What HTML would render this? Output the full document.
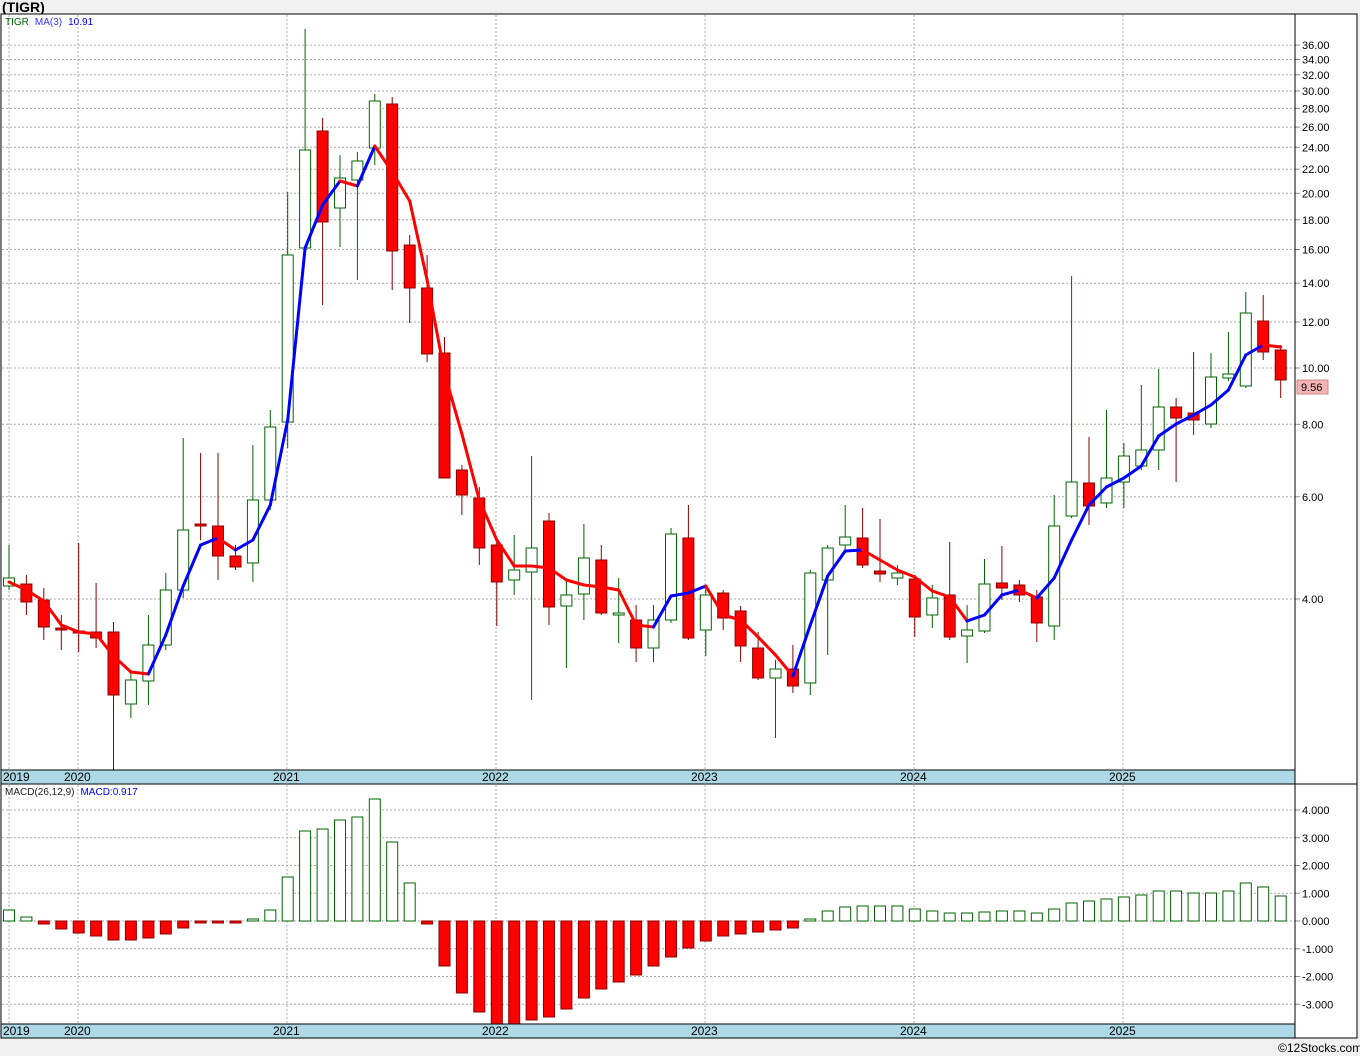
<!DOCTYPE html>
<html><head><meta charset="utf-8"><style>
body{margin:0;background:#f0f0f0;width:1360px;height:1056px;overflow:hidden;font-family:"Liberation Sans",sans-serif}
svg{position:absolute;left:0;top:0}
</style></head><body>
<svg id="s" width="1360" height="1056" xmlns="http://www.w3.org/2000/svg" font-family="Liberation Sans, sans-serif"></svg>
<script>
const S=document.getElementById('s');let h='';
h+='<text x="2" y="12" font-size="14" font-weight="bold">(TIGR)</text>';
h+='<rect x="1" y="14" width="1356" height="1024" fill="#fff" stroke="#000"/>';
h+='<text x="1278" y="1052" font-size="12">©12Stocks.com</text>';
const X=i=>9+17.42*i;
const py=p=>599-252.1*Math.log(p/4);
const years=[[9,'2019'],[78,'2020'],[287,'2021'],[496,'2022'],[705,'2023'],[914,'2024'],[1123,'2025']];
for(const [x] of years){h+=`<line x1="${x}" y1="15" x2="${x}" y2="770" stroke="#aaa" stroke-dasharray="2,2"/><line x1="${x}" y1="785" x2="${x}" y2="1024" stroke="#aaa" stroke-dasharray="2,2"/>`;}
const prices=[36,34,32,30,28,26,24,22,20,18,16,14,12,10,8,6,4];
for(const p of prices){const y=py(p).toFixed(1);h+=`<line x1="2" y1="${y}" x2="1295" y2="${y}" stroke="#aaa" stroke-dasharray="2,2"/><line x1="1295" y1="${y}" x2="1300" y2="${y}" stroke="#888"/><text x="1302" y="${+y+4}" font-size="11">${p.toFixed(2)}</text>`;}
const mv=[4,3,2,1,0,-1,-2,-3];
for(const v of mv){const y=921-27.75*v;h+=`<line x1="2" y1="${y}" x2="1295" y2="${y}" stroke="#aaa" stroke-dasharray="2,2"/><line x1="1295" y1="${y}" x2="1300" y2="${y}" stroke="#888"/><text x="1302" y="${y+4}" font-size="11">${v.toFixed(3)}</text>`;}
const C=[[586,578,545,590,1],[584,602,575,615],[600,627,588,640],[628,630,615,650],[631,633,543,652],[632,638,583,648],[632,695,622,770],[704,680,670,718],[681,645,615,705],[645,590,573,650],[590,530,438,598],[524,526,453,540],[526,556,453,580],[556,567,545,570],[563,500,445,582],[500,427,410,510],[422,255,192,448],[248,150,29,250],[131,222,118,305],[208,178,155,247],[180,161,152,280],[148,101,94,165],[104,251,97,290],[245,288,235,323],[288,354,255,362],[353,478,337,478],[470,495,465,515],[498,548,487,565],[545,582,540,626],[580,570,535,595],[572,548,456,700],[521,607,513,625],[606,595,578,668],[594,558,524,620],[560,613,545,615],[615,613,578,643],[620,648,605,662],[648,620,605,662],[620,534,528,623],[538,638,505,640],[630,595,585,656],[593,618,590,630],[611,646,606,662],[648,678,632,680],[678,669,660,738],[669,686,645,693],[683,573,570,695],[580,548,545,655],[545,537,505,550],[538,565,508,568],[571,574,519,582],[578,573,565,585],[579,617,575,637],[615,598,585,628],[595,637,542,640],[636,630,605,663],[631,584,559,633],[583,588,546,600],[585,595,580,602],[597,623,590,642],[626,526,495,640],[516,482,276,518],[483,506,437,525],[503,478,410,508],[482,456,443,508],[466,450,385,470],[450,407,369,470],[407,418,398,482],[413,420,352,435],[424,377,353,428],[378,374,332,381],[386,313,292,388],[321,352,295,360],[350,380,345,398]];
C.forEach((c,i)=>{const x=X(i);let [o,cl,hi,lo]=c;const up=cl<o;const col=up?'#006400':'#8b0000';
h+=`<line x1="${x.toFixed(1)}" y1="${hi}" x2="${x.toFixed(1)}" y2="${lo}" stroke="${col}"/>`;
const t=Math.min(o,cl),b=Math.max(o,cl);
h+=`<rect x="${(x-5.5).toFixed(1)}" y="${t}" width="11" height="${Math.max(b-t,1)}" fill="${up?'#fff':'#f00'}" stroke="${col}"/>`;});
const M=[582,590,601,625,632,634,656,672,674,635,586,545,538,550,540,505,420,248,205,181,186,146,172,201,280,373,434,500,540,566,566,568,580,585,587,590,625,627,596,593,586,615,620,637,655,676,625,576,551,550,560,570,577,591,597,621,615,595,590,598,578,540,505,487,478,466,436,424,415,405,390,355,345,347];
for(let i=0;i<M.length-1;i++){h+=`<line x1="${X(i).toFixed(1)}" y1="${M[i]}" x2="${X(i+1).toFixed(1)}" y2="${M[i+1]}" stroke="${M[i+1]<M[i]?'#00f':'#f00'}" stroke-width="3" stroke-linecap="round"/>`;}
const D=[910,917,924,929,933,936,940,940,938,934,928,923,923,923,919,910,877,831,829,820,817,799,842,883,924,966,993,1012,1024,1024,1020,1017,1009,998,989,982,975,966,957,948,941,936,934,932,930,928,919,911,907,906,906,906,909,911,913,913,912,911,911,913,909,903,901,899,897,895,891,891,893,893,891,883,887,896];
D.forEach((d,i)=>{const x=X(i)-5.5;if(d<921)h+=`<rect x="${x.toFixed(1)}" y="${d}" width="11" height="${921-d}" fill="#fff" stroke="#006400"/>`;else h+=`<rect x="${x.toFixed(1)}" y="921" width="11" height="${d-921}" fill="#f00" stroke="#8b0000"/>`;});
h+='<rect x="1" y="770" width="1294" height="14" fill="#add8e6" stroke="#000"/><rect x="1" y="1024" width="1294" height="14" fill="#add8e6" stroke="#000"/>';
h+='<line x1="1" y1="784" x2="1357" y2="784" stroke="#000"/><line x1="1295" y1="14" x2="1295" y2="1038" stroke="#000"/>';
for(const [x,t] of years){const lx=x<20?3:x-14;h+=`<line x1="${x}" y1="770" x2="${x}" y2="784" stroke="#aaa" stroke-dasharray="2,2"/><text x="${lx}" y="781" font-size="12">${t}</text><text x="${lx}" y="1035" font-size="12">${t}</text>`;}
h+='<rect x="1297" y="380" width="31" height="14" fill="#f4b4b4" stroke="#c88"/><text x="1301" y="391" font-size="11">9.56</text>';
h+='<text x="5" y="25" font-size="10"><tspan fill="#006400">TIGR</tspan><tspan fill="#33f" dx="6">MA(3)</tspan><tspan fill="#00f" dx="6">10.91</tspan></text>';
h+='<text x="5" y="795" font-size="10"><tspan fill="#222">MACD(26,12,9)</tspan><tspan fill="#00f" dx="6">MACD:0.917</tspan></text>';
S.innerHTML=h;
</script>
</body></html>
